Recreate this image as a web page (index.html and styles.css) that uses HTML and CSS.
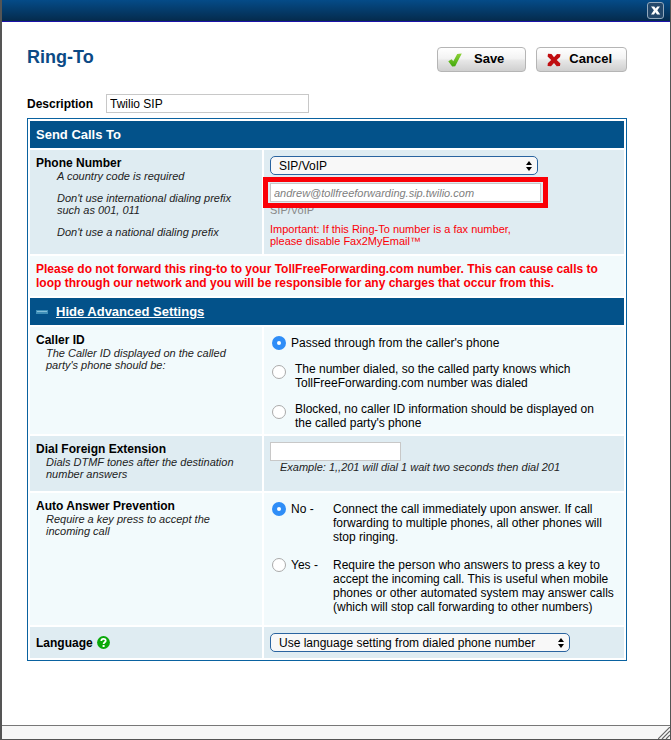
FILE: index.html
```html
<!DOCTYPE html>
<html lang="en">
<head>
<meta charset="utf-8">
<title>Ring-To</title>
<link rel="stylesheet" href="styles.css">
</head>
<body>
<header class="titlebar">
  <button class="close" type="button" aria-label="Close">
    <svg width="17" height="17" viewBox="0 0 17 17">
      <rect x="0.5" y="0.5" width="16" height="16" rx="2.5" fill="#24486b" stroke="#93a9bd"/>
      <path d="M4 4.500h3.200l1.500 2 1.500-2h2.800l-2.700 3.800 2.900 4.200h-3.200l-1.500-2.200-1.500 2.200H4l2.900-4.200z" fill="#fff"/>
    </svg>
  </button>
</header>
<main>
  <form>
    <div class="heading">
      <h1>Ring-To</h1>
      <div class="actions">
        <button class="action save" type="submit">
          <svg width="14" height="14" viewBox="0 0 14 14">
            <defs><linearGradient id="green" x1="0" y1="0" x2="0" y2="1"><stop offset="0" stop-color="#8ed238"/><stop offset="1" stop-color="#41a80c"/></linearGradient></defs>
            <path d="M0.300 8.200 3.600 6.300 5.300 8.200 9.200 0.900 13.800 0.500 7.200 13.300 4.200 13.600z" fill="url(#green)"/>
          </svg>
          <span>Save</span>
        </button>
        <button class="action" type="button">
          <svg width="14" height="14" viewBox="0 0 14 14">
            <path d="M1 0.800 4.500 1 7 4.200 10 0.900 13.500 1.200 13 4 9.700 7 13.400 10.500 12.900 13 9.700 13.200 7 10 4 13.200 0.600 12.900 0.800 10.300 4.200 7 0.600 3.600z" fill="#c00d10"/>
          </svg>
          <span>Cancel</span>
        </button>
      </div>
    </div>
    <div class="description">
      <label for="description">Description</label>
      <input class="text" id="description" type="text" value="Twilio SIP">
    </div>

    <div class="panel">
      <h2 class="bar">Send Calls To</h2>

      <div class="row tinted">
        <div class="cell">
          <label class="name" for="number-type">Phone Number</label>
          <div class="notes spaced">
            <p>A country code is required</p>
            <p>Don't use international dialing prefix such as 001, 011</p>
            <p>Don't use a national dialing prefix</p>
          </div>
        </div>
        <div class="cell">
          <div class="select number-type">
            <select id="number-type"><option>SIP/VoIP</option></select>
            <svg width="6" height="10" viewBox="0 0 6 10"><path d="M3 0 6 4H0zM0 6h6L3 10z"/></svg>
          </div>
          <div class="address">
            <input class="text" type="text" aria-label="SIP address" value="andrew@tollfreeforwarding.sip.twilio.com">
          </div>
          <p class="kind">SIP/VoIP</p>
          <p class="important">Important: If this Ring-To number is a fax number, please disable Fax2MyEmail™</p>
        </div>
      </div>

      <p class="warning">Please do not forward this ring-to to your TollFreeForwarding.com number. This can cause calls to loop through our network and you will be responsible for any charges that occur from this.</p>

      <h2 class="bar">
        <svg width="12" height="4" viewBox="0 0 12 4"><rect width="12" height="4" fill="#3f8fb8"/><rect x="1" y="1" width="10" height="1" fill="#83bfdb"/></svg>
        <a href="#advanced">Hide Advanced Settings</a>
      </h2>

      <div class="row" id="advanced">
        <div class="cell">
          <h3 class="name">Caller ID</h3>
          <p class="notes">The Caller ID displayed on the called party's phone should be:</p>
        </div>
        <div class="cell options">
          <label class="option"><input type="radio" name="caller" checked><span>Passed through from the caller's phone</span></label>
          <label class="option wrapped"><input type="radio" name="caller"><span>The number dialed, so the called party knows which TollFreeForwarding.com number was dialed</span></label>
          <label class="option wrapped"><input type="radio" name="caller"><span>Blocked, no caller ID information should be displayed on the called party's phone</span></label>
        </div>
      </div>

      <div class="row tinted">
        <div class="cell extension">
          <label class="name" for="extension">Dial Foreign Extension</label>
          <p class="notes">Dials DTMF tones after the destination number answers</p>
        </div>
        <div class="cell">
          <input class="text short" id="extension" type="text">
          <p class="notes">Example: 1,,201 will dial 1 wait two seconds then dial 201</p>
        </div>
      </div>

      <div class="row">
        <div class="cell">
          <h3 class="name">Auto Answer Prevention</h3>
          <p class="notes">Require a key press to accept the incoming call</p>
        </div>
        <div class="cell options answers">
          <label class="option"><input type="radio" name="answer" checked><span class="choice">No -</span><span>Connect the call immediately upon answer. If call forwarding to multiple phones, all other phones will stop ringing.</span></label>
          <label class="option"><input type="radio" name="answer"><span class="choice">Yes -</span><span>Require the person who answers to press a key to accept the incoming call. This is useful when mobile phones or other automated system may answer calls (which will stop call forwarding to other numbers)</span></label>
        </div>
      </div>

      <div class="row tinted">
        <div class="cell language">
          <label class="name" for="language">Language</label>
          <svg width="13" height="13" viewBox="0 0 13 13">
            <circle cx="6.500" cy="6.500" r="6.400" fill="#0aa90a"/>
            <path d="M4.300 5C4.300 2.300 8.700 2.300 8.700 4.700 8.700 6.300 6.600 6.200 6.600 8" fill="none" stroke="#fff" stroke-width="1.800"/>
            <rect x="5.600" y="9" width="2" height="2" fill="#fff"/>
          </svg>
        </div>
        <div class="cell">
          <div class="select language-choice">
            <select id="language"><option>Use language setting from dialed phone number</option></select>
            <svg width="6" height="10" viewBox="0 0 6 10"><path d="M3 0 6 4H0zM0 6h6L3 10z"/></svg>
          </div>
        </div>
      </div>
    </div>
  </form>
</main>
<footer>
  <svg width="12" height="12" viewBox="0 0 12 12"><path d="M0 12 12 0M4 12 12 4M8 12 12 8" stroke="#666" stroke-width="1.200"/></svg>
</footer>
</body>
</html>
```

FILE: styles.css
```css
* {
  box-sizing: border-box;
}

body {
  display: flex;
  flex-direction: column;
  min-height: 100vh;
  margin: 0;
  border: solid #555;
  border-width: 0 1px 1px 2px;
  background: #fff;
  color: #000;
  font: 12px/14px "Liberation Sans", Arial, sans-serif;
}

h1, h2, h3, p {
  margin: 0;
}

svg {
  display: block;
  flex: none;
}

button, input, select {
  margin: 0;
  font: inherit;
  color: inherit;
}

.titlebar {
  display: flex;
  justify-content: flex-end;
  height: 22px;
  padding: 2px 6px 0;
  border-bottom: 1px solid #1c12a8;
  background: linear-gradient(#054b88, #052b4c);
}

.close {
  width: 17px;
  height: 17px;
  padding: 0;
  border: 0;
  background: none;
}

main {
  flex: 1;
  padding: 25px 43px 25px 25px;
}

.heading {
  display: flex;
  justify-content: space-between;
}

h1 {
  color: #0b4a85;
  font-size: 18px;
  line-height: 20px;
}

.actions {
  display: flex;
  gap: 10px;
}

.action {
  display: flex;
  align-items: center;
  gap: 8px;
  height: 25px;
  padding: 0 14px 0 10px;
  border: 1px solid #b5b5b5;
  border-radius: 4px;
  background: linear-gradient(#fff, #f3f3f3 45%, #e6e6e6 55%, #cfcfcf);
  font-size: 13px;
  font-weight: bold;
}

.save {
  gap: 12px;
  padding-right: 21px;
}

.action span {
  padding-bottom: 2px;
}

.description {
  display: flex;
  align-items: center;
  gap: 13px;
  margin-top: 22px;
  font-weight: bold;
}

.text {
  display: block;
  width: 203px;
  height: 19px;
  padding: 0 3px;
  border: 1px solid #c8c8c8;
  border-radius: 0;
  background: #fff;
}

.description .text {
  font-weight: normal;
}

.panel {
  display: grid;
  gap: 2px;
  margin-top: 5px;
  padding: 2px;
  border: 1px solid #0a62a0;
}

.bar {
  display: flex;
  align-items: center;
  gap: 8px;
  height: 27px;
  padding: 0 6px;
  background: #03528a;
  color: #fff;
  font-size: 13px;
}

.bar a {
  color: #fff;
}

.row {
  display: grid;
  grid-template-columns: 232px 1fr;
  gap: 2px;
}

.cell {
  padding: 6px;
  background: #f2fafc;
}

.tinted .cell {
  background: #dfecf2;
}

.name {
  display: block;
  font-size: 12px;
  font-weight: bold;
}

.notes {
  padding: 0 10px;
  color: #222;
  font-size: 11px;
  font-style: italic;
  line-height: 12px;
}

.spaced {
  display: grid;
  gap: 10px;
  padding: 0 0 10px 21px;
}

.select {
  position: relative;
}

.select select {
  display: block;
  width: 100%;
  height: 19px;
  padding: 0 20px 0 8px;
  appearance: none;
  border: 1px solid #2a64a0;
  border-radius: 5px;
  background: #f8f8f8;
}

.select svg {
  position: absolute;
  top: 5px;
  right: 6px;
  pointer-events: none;
}

.number-type {
  width: 268px;
}

.language-choice {
  width: 300px;
}

.address {
  position: relative;
  width: 271px;
  margin-top: 8px;
}

.address::after {
  content: "";
  position: absolute;
  inset: -6px -7px;
  border: 5px solid #fb0007;
  pointer-events: none;
}

.address .text {
  width: 100%;
  color: #808080;
  font-size: 11px;
  font-style: italic;
}

.kind {
  margin-top: 2px;
  color: #888;
  font-size: 11px;
  line-height: 12px;
}

.important {
  width: 260px;
  margin-top: 7px;
  color: #fb0007;
  font-size: 11px;
  line-height: 12px;
}

.warning {
  padding: 6px;
  background: #f2fafc;
  color: #fb0007;
  font-weight: bold;
}

.options {
  display: grid;
  align-content: start;
  gap: 12px;
  padding: 9px 8px 4px;
}

.option {
  display: flex;
  align-items: flex-start;
  gap: 5px;
}

.option input {
  flex: none;
  width: 14px;
  height: 14px;
  appearance: none;
  border: 1px solid #aaa;
  border-radius: 50%;
  background: #fff;
}

.option input:checked {
  border: 5px solid #2f8df7;
}

.wrapped {
  gap: 9px;
  padding-right: 16px;
}

.wrapped input {
  margin-top: 3px;
}

.answers {
  gap: 14px;
  padding-bottom: 11px;
}

.choice {
  flex: none;
  width: 37px;
}

.extension {
  padding-bottom: 11px;
}

.short {
  width: 131px;
}

.language {
  display: flex;
  align-items: center;
  gap: 4px;
}

footer {
  display: flex;
  justify-content: flex-end;
  align-items: flex-end;
  height: 14px;
  border-top: 1px solid #777;
  background: #f7f7f7;
}
```
